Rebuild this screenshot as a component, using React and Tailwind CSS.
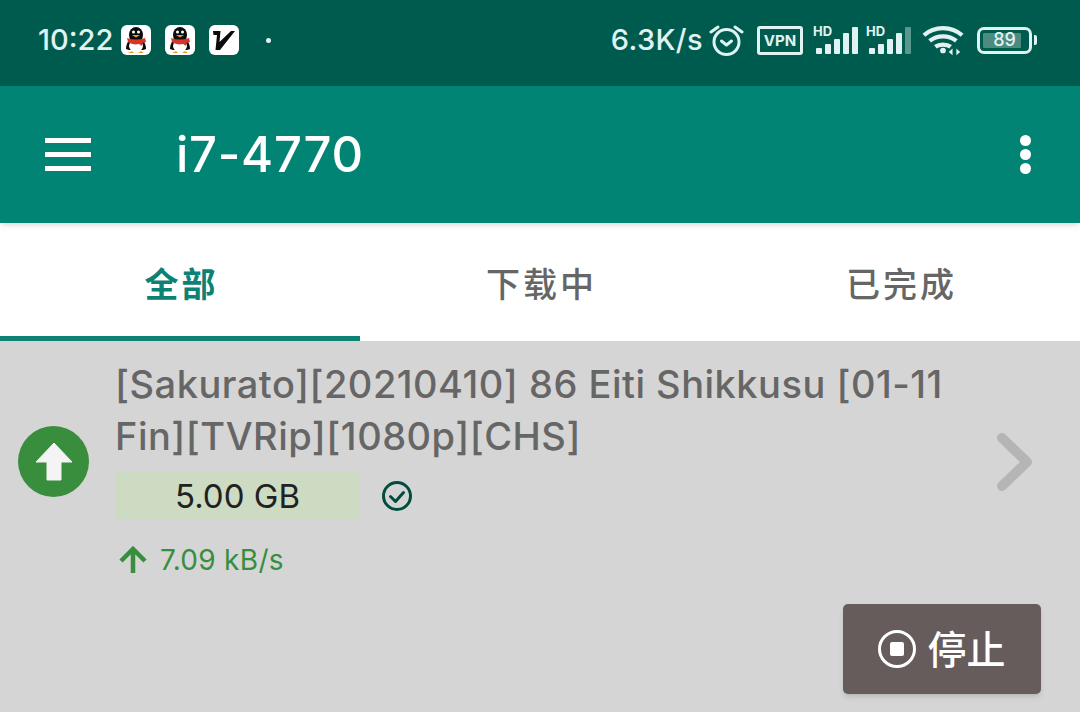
import React from 'react';

const sans = "font-['Inter','Noto_Sans_CJK_SC',sans-serif]";

// QQ penguin notification icon
function Penguin() {
    return (
        <div className="w-[30px] h-[30px] rounded-[6px] bg-white flex items-center justify-center">
            <svg width="26" height="28" viewBox="0 0 26 28">
                <ellipse cx="13" cy="9" rx="7" ry="8" fill="#0b0b0b" />
                <path d="M6 14c-2 3-3 6-3 9l3 1 14 0 3-1c0-3-1-6-3-9z" fill="#0b0b0b" />
                <ellipse cx="13" cy="20" rx="7" ry="6" fill="#fff" />
                <circle cx="10.500" cy="6" r="1.500" fill="#fff" />
                <circle cx="15.500" cy="6" r="1.500" fill="#fff" />
                <path d="M9 9h8l-4 2.500z" fill="#e8a020" />
                <path d="M4 12c6 2 12 2 18 0l1 4-4 1v3l-3-2c-4 1-8 0-11-2z" fill="#d8352a" />
                <path d="M5 27h6l-2-2zM15 27h6l-3-2z" fill="#e8a020" />
            </svg>
        </div>
    );
}

function VIcon() {
    return (
        <div className="w-[30px] h-[30px] rounded-[6px] bg-white flex items-center justify-center">
            <svg width="26" height="26" viewBox="0 0 26 26">
                <path d="M2 4h7.500l-1 11L20 4h4L9 23H4.500l1.500-15H2.500z" fill="#0b0b0b" />
            </svg>
        </div>
    );
}

function Signal({ dim }) {
    const bars = [6, 10, 15, 21, 27];
    return (
        <div className="relative w-[45px] h-[28px]">
            <span className="absolute left-0 top-0 text-[13px] leading-[10px] font-bold">HD</span>
            <svg width="45" height="28" viewBox="0 0 45 28">
                {bars.map((h, i) => (
                    <rect
                        key={i}
                        x={3 + i * 9}
                        y={28 - h}
                        width="6"
                        height={h}
                        rx="1"
                        fill="#e0f2f1"
                        opacity={dim && i === 4 ? 0.4 : 1}
                    />
                ))}
            </svg>
        </div>
    );
}

export default function App() {
    return (
        <div className={`w-[1080px] h-[712px] overflow-hidden bg-[#d5d5d5] flex flex-col ${sans}`}>

            {/* STATUS BAR */}
            <div className="h-[86px] shrink-0 bg-[#005b4f] flex items-center pl-[38px] pr-[43px] pb-[6px] text-[#e0f2f1]">
                <span className="w-[83px] text-[29px] font-medium">10:22</span>
                <div className="flex gap-[14px]">
                    <Penguin />
                    <Penguin />
                    <VIcon />
                </div>
                <div className="w-[5px] h-[5px] rounded-full bg-[#e0f2f1] ml-[27px]" />

                <span className="ml-auto text-[29px] tracking-[0.4px] font-medium">6.3K/s</span>
                <svg className="ml-[6px]" width="35" height="34" viewBox="0 0 35 34" fill="none" stroke="#e0f2f1" strokeWidth="3">
                    <circle cx="17.500" cy="19" r="12.500" />
                    <path d="M12.500 18l5 4 5-4" strokeLinecap="round" strokeLinejoin="round" />
                    <path d="M2 9l7-5M33 9l-7-5" strokeLinecap="round" />
                </svg>
                <div className="ml-[13px] w-[46px] h-[29px] border-[3px] border-[#e0f2f1] rounded-[3px] flex items-center justify-center text-[15px] font-bold leading-none">
                    VPN
                </div>
                <div className="ml-[10px] flex gap-[8px]">
                    <Signal />
                    <Signal dim />
                </div>
                <svg className="ml-[11px]" width="42" height="32" viewBox="0 0 44 32" fill="none" stroke="#e0f2f1" strokeWidth="4.500">
                    <path d="M2 11c11-10 29-10 40 0" />
                    <path d="M8 17c8-6.500 20-6.500 28 0" />
                    <path d="M14 23c4-3 12-3 16 0" />
                    <circle cx="22" cy="27" r="3" fill="#e0f2f1" stroke="none" />
                    <path d="M32 32v-7l-4 3.500zM36 25v7l4-3.500z" fill="#e0f2f1" stroke="none" />
                </svg>
                <div className="ml-[13px] flex items-center">
                    <div className="w-[55px] h-[27px] border-[3px] border-[#e0f2f1] rounded-[7px] p-[3px] relative">
                        <div className="h-full w-[88%] bg-[#4d8a80] rounded-[1px]" />
                        <span className="absolute inset-0 flex items-center justify-center text-[18px] leading-none font-medium">89</span>
                    </div>
                    <div className="w-[3px] h-[10px] ml-[2px] bg-[#e0f2f1] rounded-r-[2px]" />
                </div>
            </div>

            {/* TOOLBAR */}
            <div className="relative z-10 h-[137px] shrink-0 bg-[#028475] shadow-md flex items-center text-white">
                <div className="ml-[45px] w-[46px] flex flex-col gap-[9px]">
                    <div className="h-[5px] bg-white" />
                    <div className="h-[5px] bg-white" />
                    <div className="h-[5px] bg-white" />
                </div>
                <h1 className="ml-[85px] text-[49px] tracking-[0.7px] font-medium leading-none">i7-4770</h1>
                <div className="ml-auto mr-[49px] flex flex-col gap-[3px]">
                    <div className="w-[11px] h-[11px] rounded-full bg-white" />
                    <div className="w-[11px] h-[11px] rounded-full bg-white" />
                    <div className="w-[11px] h-[11px] rounded-full bg-white" />
                </div>
            </div>

            {/* TABS */}
            <div className="h-[118px] shrink-0 bg-white grid grid-cols-3 text-[34px] tracking-[3px] text-[#666666]">
                <div className="flex items-center justify-center pt-[9px] pl-[3px] text-[#0e8175] border-b-[5px] border-[#0e8175] font-bold">全部</div>
                <div className="flex items-center justify-center pt-[9px] pl-[3px] border-b-[5px] border-transparent font-medium">下载中</div>
                <div className="flex items-center justify-center pt-[9px] pl-[3px] border-b-[5px] border-transparent font-medium">已完成</div>
            </div>

            {/* TORRENT ROW */}
            <div className="relative flex-1 flex items-start">
                <div className="ml-[18px] mt-[85px] w-[71px] h-[71px] rounded-full bg-[#388e3c] flex items-center justify-center shrink-0">
                    <svg width="38" height="39" viewBox="0 0 38 39">
                        <path d="M19 1L37 20H26V38H12V20H1z" fill="#f4f4f4" stroke="#f4f4f4" strokeLinejoin="round" />
                    </svg>
                </div>
                <div className="ml-[26px] mt-[17px] w-[850px]">
                    <p className="text-[38px] tracking-[0.5px] font-medium leading-[52px] text-[#666666]">[Sakurato][20210410] 86 Eiti Shikkusu [01-11 Fin][TVRip][1080p][CHS]</p>
                    <div className="mt-[9px] flex items-center">
                        <div className="w-[245px] h-[49px] pt-[2px] bg-[#ccdbc2] flex items-center justify-center text-[33px] text-[#212121]">5.00 GB</div>
                        <svg className="ml-[22px]" width="30" height="30" viewBox="0 0 30 30" fill="none" stroke="#004d40" strokeWidth="3">
                            <circle cx="15" cy="15" r="13.500" />
                            <path d="M8.500 15.500l5 5 8-9" strokeLinecap="round" strokeLinejoin="round" />
                        </svg>
                    </div>
                    <div className="mt-[26px] ml-[4px] flex items-center text-[#388e3c] text-[28px] tracking-[0.3px] leading-none">
                        <svg width="28" height="28" viewBox="0 0 28 28" fill="none" stroke="#388e3c" strokeWidth="4.500">
                            <path d="M14 27V3M2 15L14 3l12 12" />
                        </svg>
                        <span className="ml-[13px]">7.09 kB/s</span>
                    </div>
                </div>
                <svg className="absolute left-[997px] top-[92px]" width="35" height="58" viewBox="0 0 35 58" fill="none" stroke="#b5b5b5" strokeWidth="10" strokeLinecap="round" strokeLinejoin="round">
                    <path d="M5 5l25 24L5 53" />
                </svg>
                <button className="absolute left-[843px] top-[263px] w-[198px] h-[90px] rounded-[5px] bg-[#665c5c] shadow-md flex items-center justify-center gap-[11px] text-white text-[39px] font-medium">
                    <svg width="38" height="38" viewBox="0 0 38 38" fill="none">
                        <circle cx="19" cy="19" r="17.500" stroke="#fff" strokeWidth="3" />
                        <rect x="12" y="12" width="14" height="14" rx="2" fill="#fff" />
                    </svg>
                    <span className="pt-[3px]">停止</span>
                </button>
            </div>

        </div>
    );
}
